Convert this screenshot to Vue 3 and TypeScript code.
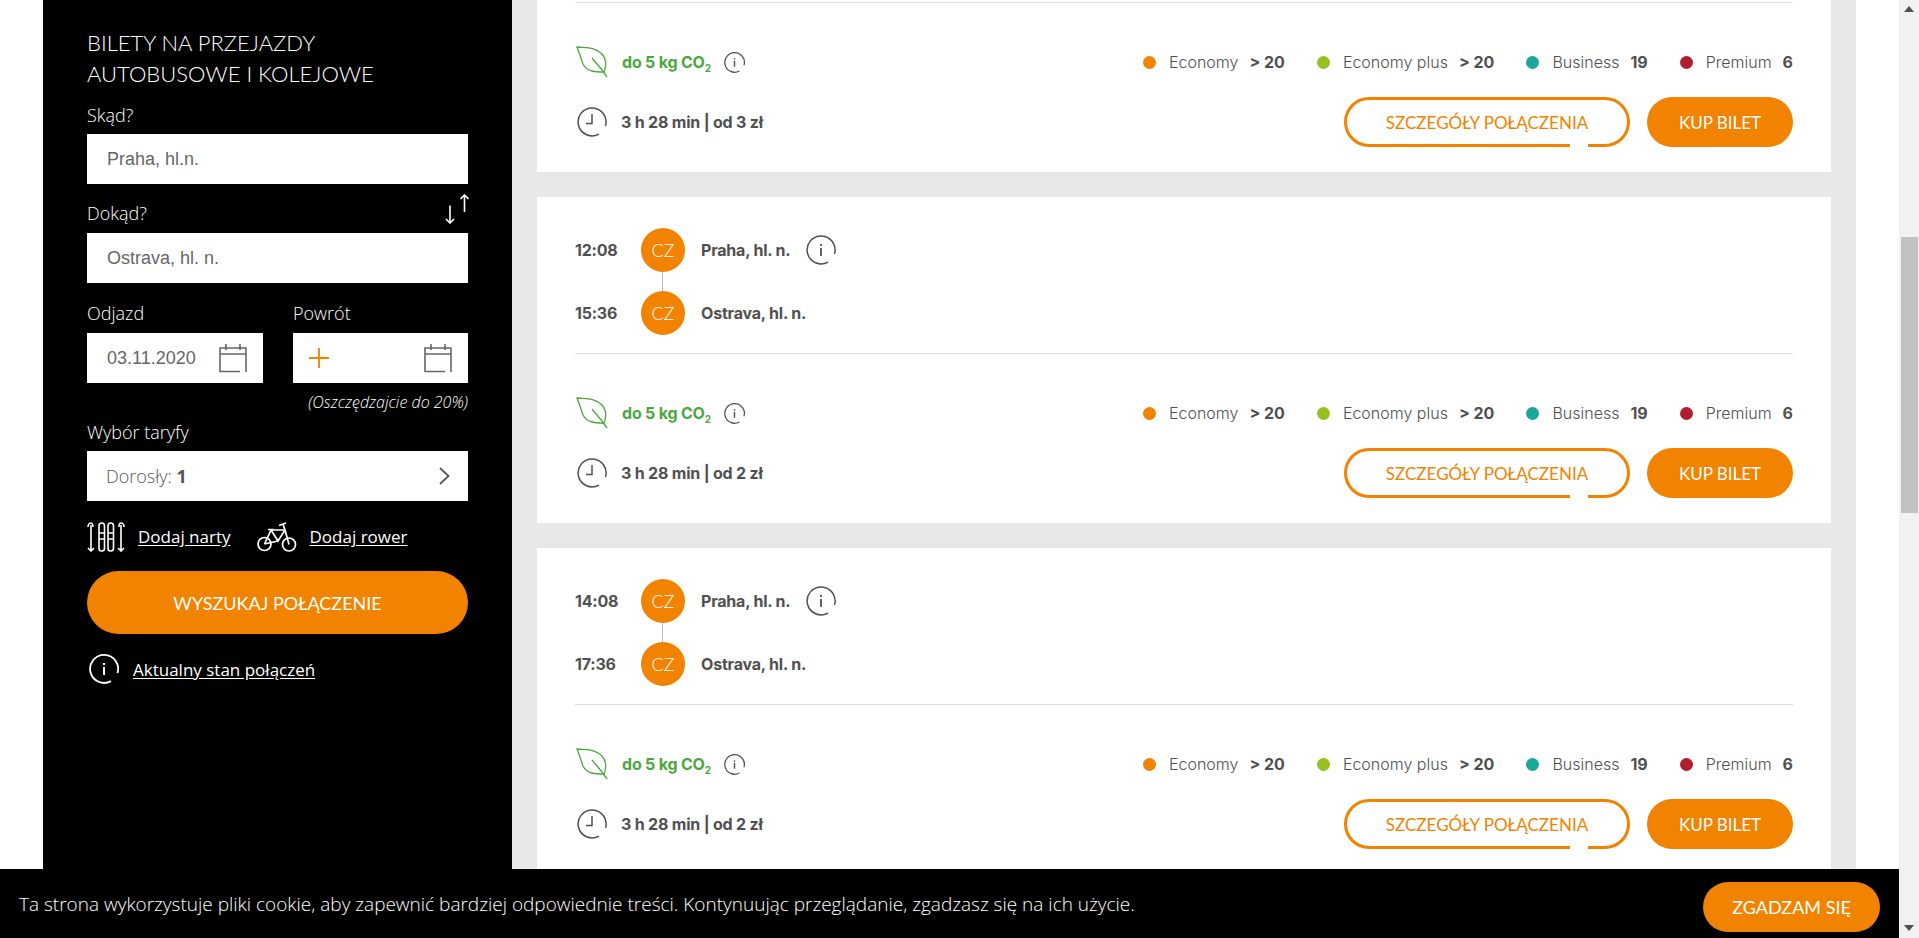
<script setup lang="ts">
interface Fare {
  name: string
  count: string
  color: string
}

interface Trip {
  from: string
  to: string
  price: number
}

const fares: Fare[] = [
  { name: 'Economy', count: '> 20', color: '#f28300' },
  { name: 'Economy plus', count: '> 20', color: '#97c11f' },
  { name: 'Business', count: '19', color: '#1ba89c' },
  { name: 'Premium', count: '6', color: '#b01f2e' },
]

const trips: Trip[] = [
  { from: '10:08', to: '13:36', price: 3 },
  { from: '12:08', to: '15:36', price: 2 },
  { from: '14:08', to: '17:36', price: 2 },
]
</script>

<template>
  <div class="page">
    <div class="main">
      <aside class="sidebar">
        <h1 class="title">BILETY NA PRZEJAZDY<br />AUTOBUSOWE I KOLEJOWE</h1>

        <div class="label first">Skąd?</div>
        <div class="field">Praha, hl.n.</div>

        <div class="label to-row">
          <span>Dokąd?</span>
          <svg class="swap" width="24" height="30" viewBox="0 0 24 30" fill="none" stroke="#fff" stroke-width="1.6">
            <path d="M5 11.5V29M1 25l4 4 4-4" />
            <path d="M19.500 0.800V18M15.500 5l4-4 4 4" />
          </svg>
        </div>
        <div class="field">Ostrava, hl. n.</div>

        <div class="dates">
          <div class="date-col left">
            <div class="label">Odjazd</div>
            <div class="field date">
              <span>03.11.2020</span>
              <svg width="28" height="30" viewBox="0 0 28 30" fill="none" stroke="#666" stroke-width="1.600">
                <path d="M1 29V5h26v24M1 11h26M7 1v6M21 1v6M1 28.500h20" />
              </svg>
            </div>
          </div>
          <div class="date-col right">
            <div class="label">Powrót</div>
            <div class="field date ret">
              <svg width="20" height="20" viewBox="0 0 20 20" stroke="#f28300" stroke-width="1.800">
                <path d="M0 10h20M10 0v20" />
              </svg>
              <svg width="28" height="30" viewBox="0 0 28 30" fill="none" stroke="#666" stroke-width="1.600">
                <path d="M1 29V5h26v24M1 11h26M7 1v6M21 1v6M1 28.500h20" />
              </svg>
            </div>
          </div>
        </div>
        <div class="save">(Oszczędzajcie do 20%)</div>

        <div class="label tariff">Wybór taryfy</div>
        <div class="field select">
          <span>Dorosły: <b>1</b></span>
          <svg width="11" height="18" viewBox="0 0 11 18" fill="none" stroke="#555" stroke-width="1.800">
            <path d="M1 1l8.500 8L1 17" />
          </svg>
        </div>

        <div class="extras">
          <svg width="38" height="30" viewBox="0 0 38 30" fill="none" stroke="#fff" stroke-width="1.600">
            <path d="M4 3v26M1 26l3 3 3-3M1 5c0-3 2-4 3-4s2 2 2 4" />
            <path d="M34 3v26M31 26l3 3 3-3M32 5c0-3 1-4 2-4s3 1 3 4" />
            <rect x="12" y="1" width="5.500" height="28" rx="2.700" />
            <rect x="21" y="1" width="5.500" height="28" rx="2.700" />
            <path d="M12 11h5.500M12 17h5.500M21 11h5.500M21 17h5.500" />
          </svg>
          <a class="link narty">Dodaj narty</a>
          <svg class="bike" width="40" height="31" viewBox="0 0 40 31" fill="none" stroke="#fff" stroke-width="1.700">
            <circle cx="7.500" cy="23" r="6.500" />
            <circle cx="32" cy="23.500" r="6.500" />
            <path d="M7.500 23L14 9h14M14 9l7 11 7-11 4 14.500M21 20L7.500 23M26 3l2 6M22 4.500l7-2.500M11 8.500h6" />
          </svg>
          <a class="link">Dodaj rower</a>
        </div>

        <button class="search">WYSZUKAJ POŁĄCZENIE</button>

        <div class="status">
          <svg width="30" height="30" viewBox="0 0 30 30" fill="none" stroke="#fff" stroke-width="1.800">
            <path d="M22 27.100A14 14 0 1 1 28.500 19" />
            <path d="M15 13v8M15 9v2" stroke-width="2" />
          </svg>
          <a class="link">Aktualny stan połączeń</a>
        </div>
      </aside>

      <section class="results">
        <div class="list">
          <article v-for="trip in trips" :key="trip.from" class="card">
            <div class="stop">
              <span class="time">{{ trip.from }}</span>
              <span class="badge">CZ</span>
              <span class="station">Praha, hl. n.</span>
              <svg class="stop-info" width="30" height="30" viewBox="0 0 30 30" fill="none" stroke="#505050" stroke-width="1.500">
                <path d="M22 27.100A14 14 0 1 1 28.500 19" />
                <path d="M15 13v8M15 9v2" stroke-width="1.800" />
              </svg>
            </div>
            <div class="stop">
              <span class="time">{{ trip.to }}</span>
              <span class="badge">CZ</span>
              <span class="station">Ostrava, hl. n.</span>
            </div>

            <div class="details">
              <div class="row eco-row">
                <div class="eco">
                  <svg class="leaf" width="32" height="32" viewBox="0 0 32 32" fill="none" stroke="#4aa83c" stroke-width="1.300">
                    <path d="M1 1C10 2 20 1 26 8C31 14 30 21 28 26C20 26 11 26 7 18C5 12 3 6 1 1Z" />
                    <path d="M16 12L26 24L31 31" />
                  </svg>
                  <span class="co2">do 5 kg CO<sub>2</sub></span>
                  <svg class="eco-info" width="21" height="21" viewBox="0 0 30 30" fill="none" stroke="#505050" stroke-width="1.800">
                    <path d="M22 27.100A14 14 0 1 1 28.500 19" />
                    <path d="M15 13v8M15 9v2" stroke-width="2" />
                  </svg>
                </div>
                <div class="fares">
                  <div v-for="fare in fares" :key="fare.name" class="fare">
                    <span class="dot" :style="{ background: fare.color }"></span>
                    <span class="fare-name">{{ fare.name }}</span>
                    <b class="fare-count">{{ fare.count }}</b>
                  </div>
                </div>
              </div>

              <div class="row buy-row">
                <div class="duration">
                  <svg width="30" height="30" viewBox="0 0 30 30" fill="none" stroke="#505050" stroke-width="1.500">
                    <path d="M22 27.100A14 14 0 1 1 28.500 19" />
                    <path d="M15 7v9.500H9" />
                  </svg>
                  <span>3 h 28 min | od {{ trip.price }} zł</span>
                </div>
                <div class="actions">
                  <button class="btn outline">SZCZEGÓŁY POŁĄCZENIA<i class="notch"></i></button>
                  <button class="btn buy">KUP BILET</button>
                </div>
              </div>
            </div>
          </article>
        </div>
      </section>

      <div class="cookie">
        <p>Ta strona wykorzystuje pliki cookie, aby zapewnić bardziej odpowiednie treści. Kontynuując przeglądanie, zgadzasz się na ich użycie.</p>
        <button class="agree">ZGADZAM SIĘ</button>
      </div>
    </div>

    <div class="scrollbar">
      <svg width="10" height="6" viewBox="0 0 10 6"><path d="M5 0l5 6H0z" fill="#505050" /></svg>
      <div class="thumb"></div>
      <svg class="arrow-down" width="10" height="6" viewBox="0 0 10 6"><path d="M0 0h10L5 6z" fill="#505050" /></svg>
    </div>
  </div>
</template>

<style>
html,
body {
  margin: 0;
  overflow: hidden;
  background: #fff;
}
</style>

<style scoped>
.page {
  display: flex;
  height: 938px;
  overflow: hidden;
  background: #fff;
}
.main {
  position: relative;
  display: flex;
  flex: 1;
  min-width: 0;
  padding-left: 43px;
}

/* left search form */
.sidebar {
  width: 469px;
  box-sizing: border-box;
  padding: 27px 44px 0;
  background: #000;
  color: #fff;
  font-family: 'Open Sans', sans-serif;
  font-weight: 300;
  flex-shrink: 0;
}
.title {
  margin: 0;
  font: 300 22px/31px Lato, sans-serif;
  color: #fff;
}
.label {
  font-size: 18px;
  line-height: 24px;
  margin-bottom: 8px;
}
.label.first {
  margin-top: 14px;
  margin-bottom: 7px;
}
.to-row {
  display: flex;
  justify-content: space-between;
  align-items: flex-end;
  margin-top: 17px;
}
.swap {
  margin: -7px -1px -1px 0;
  align-self: flex-start;
}
.field {
  display: flex;
  align-items: center;
  height: 50px;
  box-sizing: border-box;
  padding-left: 20px;
  background: #fff;
  color: #666;
  font: 400 18px 'Liberation Sans', Arial, sans-serif;
}
.dates {
  display: flex;
  gap: 30px;
  margin-top: 18px;
}
.date-col.left {
  width: 176px;
}
.date-col.right {
  width: 175px;
}
.date {
  justify-content: space-between;
  padding-right: 16px;
}
.ret {
  padding-left: 16px;
}
.save {
  margin-top: 8px;
  font-size: 16px;
  line-height: 22px;
  font-style: italic;
  text-align: right;
}
.tariff {
  margin-top: 7px;
  margin-bottom: 7px;
}
.select {
  justify-content: space-between;
  padding: 0 18px 0 19px;
  font-family: 'Open Sans', sans-serif;
  font-weight: 300;
  font-size: 18px;
  color: #555;
}
.select b {
  font-weight: 700;
}
.extras {
  display: flex;
  align-items: center;
  height: 31px;
  margin-top: 20px;
  font-size: 17px;
}
.link {
  color: #fff;
  text-decoration: underline;
  text-underline-offset: 2px;
  font-size: 17px;
  font-weight: 400;
}
.extras .link {
  margin-left: 13px;
}
.extras .narty {
  margin-right: 26px;
}
.search {
  display: block;
  width: 100%;
  height: 63px;
  margin-top: 19px;
  border: 0;
  border-radius: 32px;
  background: #f28300;
  color: #fff;
  font: 400 18px Lato, sans-serif;
}
.status {
  display: flex;
  align-items: center;
  gap: 14px;
  height: 30px;
  margin-top: 20px;
  padding-left: 2px;
}

/* results column */
.results {
  width: 1344px;
  box-sizing: border-box;
  padding: 0 25px;
  background: #e8e8e8;
  flex-shrink: 0;
  overflow: hidden;
}
.list {
  display: flex;
  flex-direction: column;
  gap: 25px;
  margin-top: -154px;
}
.card {
  height: 326px;
  box-sizing: border-box;
  padding: 31px 38px 0;
  background: #fff;
  color: #505050;
  font-family: Inter, sans-serif;
}
.stop {
  display: flex;
  align-items: center;
  height: 44px;
}
.stop + .stop {
  margin-top: 19px;
}
.time {
  width: 66px;
  font-size: 16px;
  font-weight: 700;
  letter-spacing: -0.2px;
}
.badge {
  position: relative;
  display: flex;
  align-items: center;
  justify-content: center;
  width: 44px;
  height: 44px;
  border-radius: 50%;
  background: #f28300;
  color: #fff;
  font: 300 18px Lato, sans-serif;
}
.stop + .stop .badge::before {
  content: '';
  position: absolute;
  left: 21px;
  top: -19px;
  width: 1px;
  height: 19px;
  background: #bbb;
}
.station {
  margin-left: 16px;
  font-size: 16px;
  font-weight: 700;
  letter-spacing: -0.2px;
}
.stop-info {
  margin-left: 15px;
}
.details {
  margin-top: 18px;
  padding-top: 43px;
  border-top: 1px solid #ddd;
}
.row {
  display: flex;
  justify-content: space-between;
  align-items: center;
}
.eco-row {
  height: 32px;
}
.eco {
  display: flex;
  align-items: center;
  color: #4aa83c;
  font-size: 16px;
  font-weight: 700;
}
.leaf {
  margin-left: 1px;
}
.co2 {
  margin-left: 14px;
  letter-spacing: -0.2px;
}
.co2 sub {
  font-size: 10px;
  line-height: 0;
}
.eco-info {
  margin-left: 13px;
}
.fares {
  display: flex;
  gap: 32px;
  font-size: 16px;
}
.fare {
  display: flex;
  align-items: center;
}
.dot {
  width: 13px;
  height: 13px;
  border-radius: 50%;
  margin-right: 13px;
}
.fare-name {
  font-weight: 300;
}
.fare-count {
  margin-left: 11px;
  font-weight: 700;
}
.buy-row {
  margin-top: 19px;
}
.duration {
  display: flex;
  align-items: center;
  gap: 14px;
  padding-left: 2px;
  font-size: 16px;
  font-weight: 700;
  letter-spacing: -0.2px;
}
.actions {
  display: flex;
  gap: 17px;
}
.btn {
  position: relative;
  height: 50px;
  box-sizing: border-box;
  border-radius: 25px;
  font: 400 17px Lato, sans-serif;
  padding: 0;
}
.outline {
  width: 286px;
  border: 3px solid #f28300;
  background: #fff;
  color: #f28300;
}
.notch {
  position: absolute;
  right: 39px;
  bottom: -3px;
  width: 18px;
  height: 3px;
  background: #fff;
}
.buy {
  width: 146px;
  border: 0;
  background: #f28300;
  color: #fff;
}

/* cookie bar */
.cookie {
  position: absolute;
  left: 0;
  right: 0;
  bottom: 0;
  display: flex;
  align-items: center;
  justify-content: space-between;
  height: 69px;
  box-sizing: border-box;
  padding: 0 19px;
  background: #000;
}
.cookie p {
  margin: 0;
  color: #fff;
  font: 300 19px 'Open Sans', sans-serif;
}
.agree {
  width: 177px;
  height: 50px;
  margin-top: 6px;
  border: 0;
  border-radius: 25px;
  background: #f28300;
  color: #fff;
  font: 400 18px Lato, sans-serif;
}

/* fake browser scrollbar */
.scrollbar {
  display: flex;
  flex-direction: column;
  align-items: center;
  width: 20px;
  flex-shrink: 0;
  padding-top: 6px;
  box-sizing: border-box;
  background: #f1f1f1;
}
.thumb {
  width: 17px;
  height: 276px;
  margin-top: 225px;
  background: #c1c1c1;
}
.arrow-down {
  margin-top: auto;
  margin-bottom: 7px;
}
</style>
